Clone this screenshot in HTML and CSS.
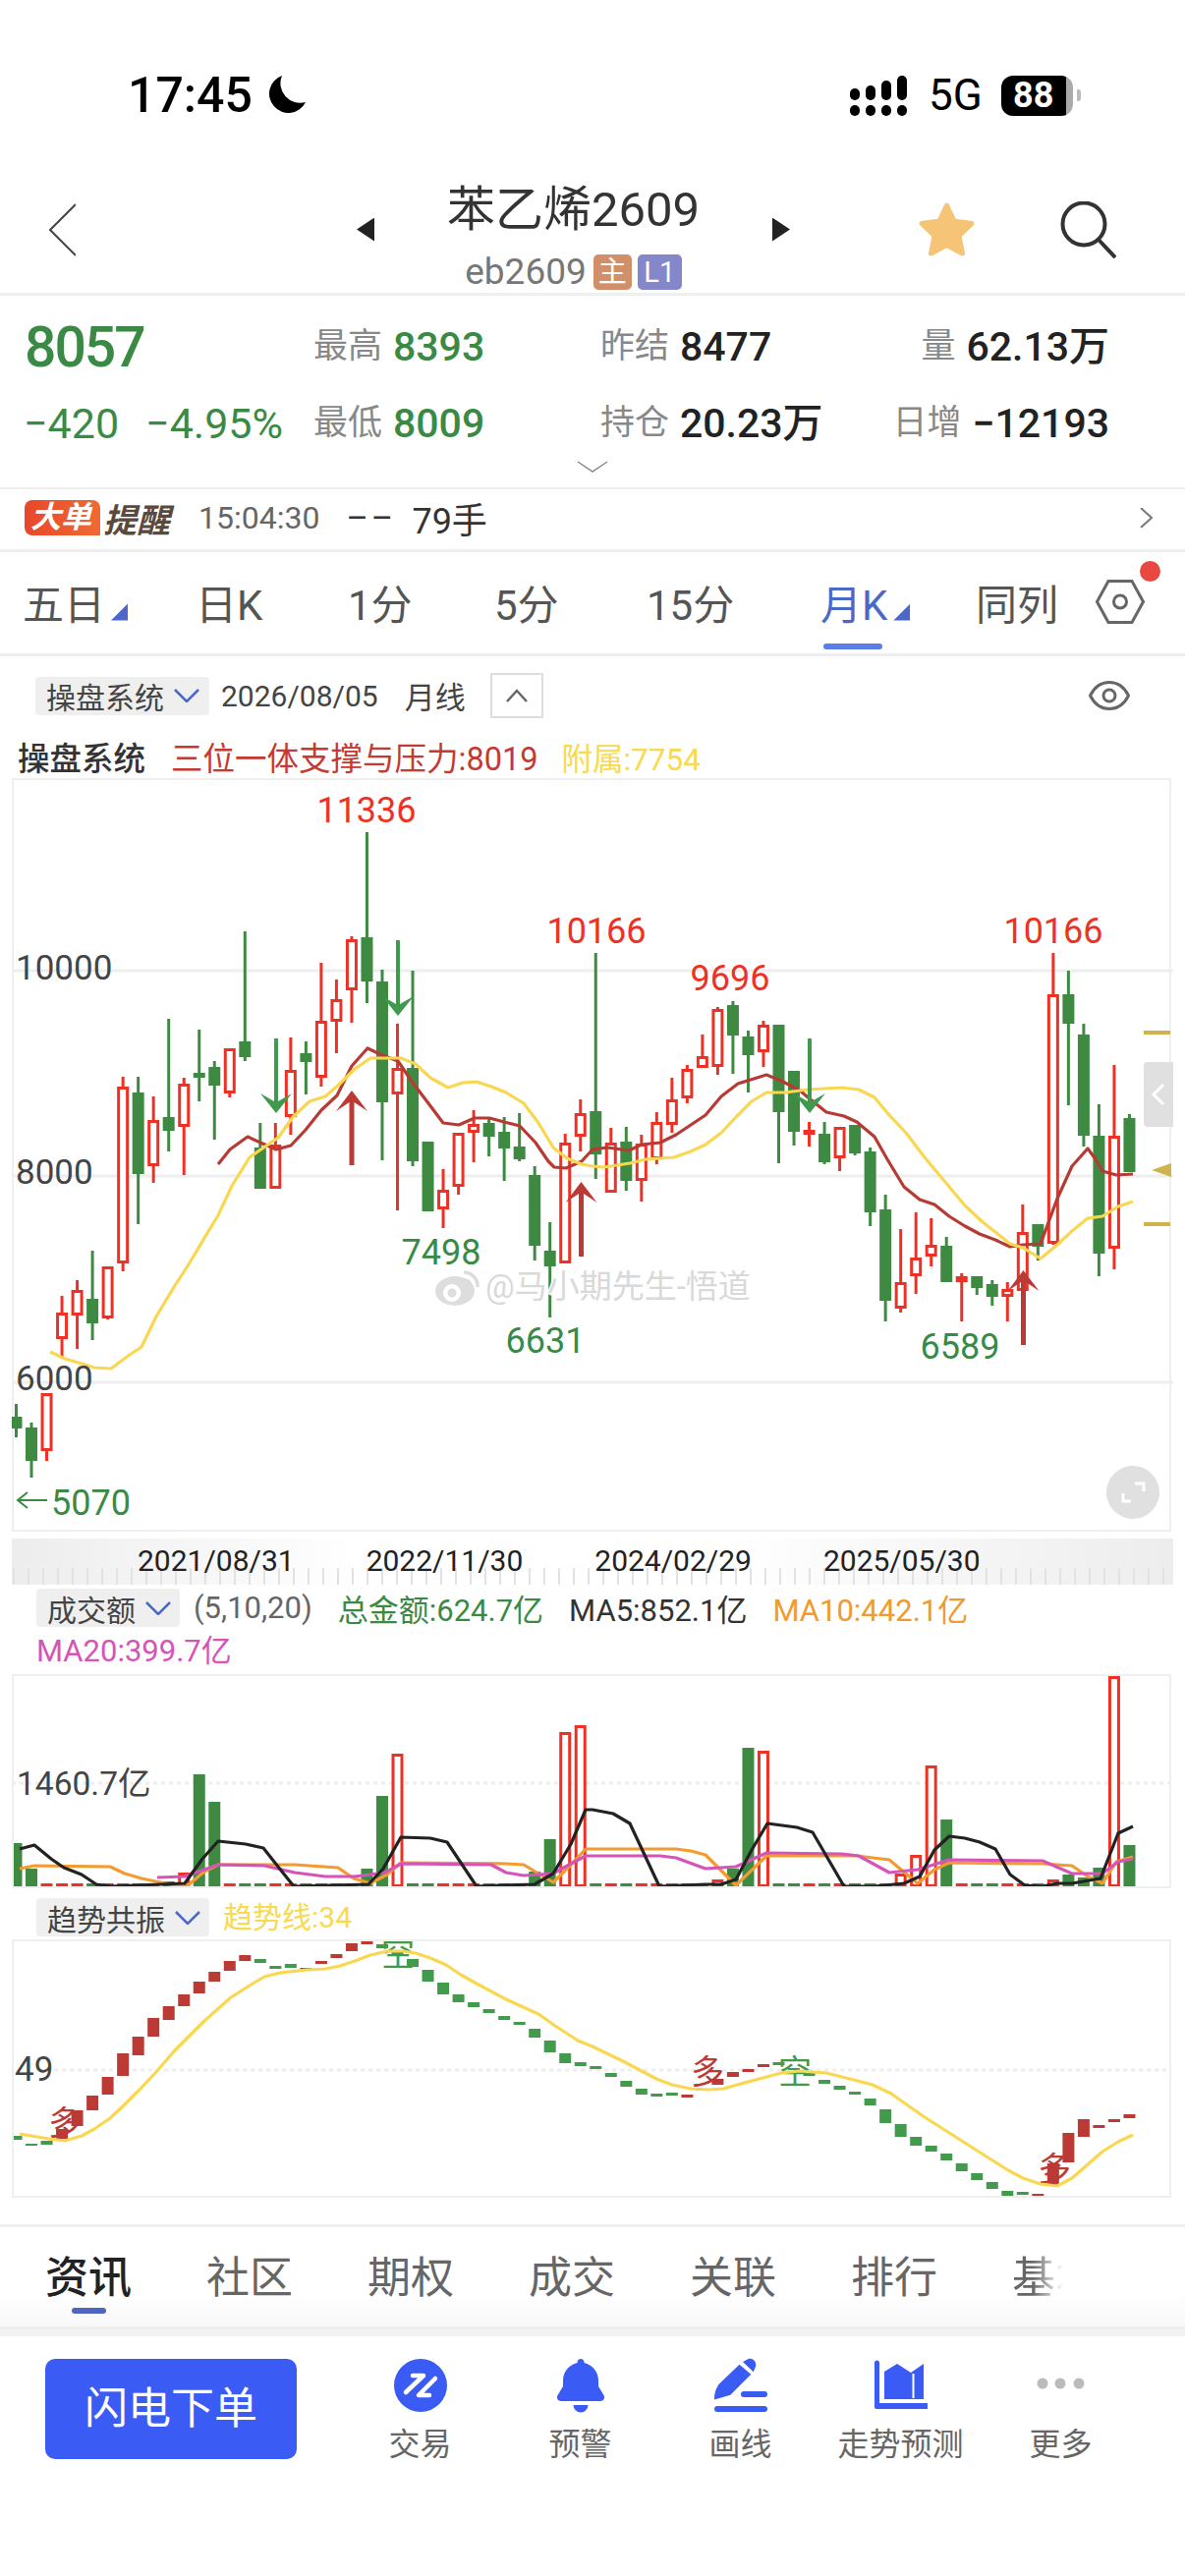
FILE: index.html
```html
<!DOCTYPE html>
<html lang="zh-CN">
<head>
    <meta charset="UTF-8">
    <meta name="viewport" content="width=device-width, initial-scale=1.0">
    <title>苯乙烯2609</title>
    <link rel="stylesheet" href="styles.css">
</head>
<body>

    <!-- Status bar -->
    <div class="status">
        <span class="clock">17:45</span>
        <svg class="moon" viewBox="0 0 39 39"><path d="M15 0A19.5 19.5 0 1 0 39 27A20 20 0 0 1 15 0Z"/></svg>
        <svg class="signal" viewBox="0 0 58 41">
            <rect x="0" y="13" width="10" height="12" rx="5"/><rect x="16" y="10" width="10" height="15" rx="5"/>
            <rect x="32" y="5" width="10" height="20" rx="5"/><rect x="48" y="0" width="10" height="25" rx="5"/>
            <rect x="0" y="30" width="10" height="11" rx="5"/><rect x="16" y="30" width="10" height="11" rx="5"/>
            <rect x="32" y="30" width="10" height="11" rx="5"/><rect x="48" y="30" width="10" height="11" rx="5"/>
        </svg>
        <span class="net">5G</span>
        <span class="battery">88</span>
    </div>

    <!-- Title bar -->
    <div class="nav">
        <svg class="back" viewBox="0 0 27 54"><path d="M27 1L1 27L27 53"/></svg>
        <span class="tri tri-left"></span>
        <div class="title-box">
            <div class="title">苯乙烯2609</div>
            <div class="subtitle">eb2609<span class="tag tag-main">主</span><span class="tag tag-level">L1</span></div>
        </div>
        <span class="tri tri-right"></span>
        <svg class="star" viewBox="0 0 61 60"><path d="M30.5 5L38 21L56 23.5L43 36L46.5 54L30.5 45.5L14.5 54L18 36L5 23.5L23 21Z"/></svg>
        <svg class="search" viewBox="0 0 58 58"><circle cx="24" cy="23" r="21.5"/><path d="M39 39L56 57"/></svg>
    </div>

    <!-- Quote -->
    <div class="quote">
        <div class="quote-grid">
            <div class="price green">8057</div>
            <div class="cell"><span class="lab">最高</span><span class="val green">8393</span></div>
            <div class="cell"><span class="lab">昨结</span><span class="val">8477</span></div>
            <div class="cell cell-end"><span class="lab">量</span><span class="val">62.13万</span></div>
            <div class="change green"><span>−420</span><span>−4.95%</span></div>
            <div class="cell"><span class="lab">最低</span><span class="val green">8009</span></div>
            <div class="cell"><span class="lab">持仓</span><span class="val">20.23万</span></div>
            <div class="cell cell-end"><span class="lab">日增</span><span class="val">−12193</span></div>
        </div>
        <svg class="more-down" viewBox="0 0 32 12"><path d="M1 1L16 11L31 1"/></svg>
    </div>

    <!-- Big order alert -->
    <div class="alert">
        <span class="alert-tag">大单</span>
        <span class="alert-word">提醒</span>
        <span class="alert-time">15:04:30</span>
        <span class="alert-dash">––</span>
        <span class="alert-qty">79手</span>
        <svg class="alert-go" viewBox="0 0 13 20"><path d="M1 0L12 10L1 20"/></svg>
    </div>

    <!-- Period tabs -->
    <div class="periods">
        <div class="period">五日<span class="corner"></span></div>
        <div class="period">日K</div>
        <div class="period">1分</div>
        <div class="period">5分</div>
        <div class="period">15分</div>
        <div class="period period-on">月K<span class="corner"></span></div>
        <div class="period">同列</div>
        <div class="gear-box">
            <svg class="gear" viewBox="0 0 50 45"><path d="M1.5 22.5L13 1.5H37L48.5 22.5L37 43.5H13Z"/><circle cx="25" cy="22.5" r="6.5"/></svg>
            <span class="red-dot"></span>
        </div>
    </div>

    <!-- Chart toolbar -->
    <div class="toolbar">
        <div class="pill pill-main">操盘系统<svg class="chev" viewBox="0 0 26 14"><path d="M1 1L13 13L25 1"/></svg></div>
        <span class="bar-date">2026/08/05</span>
        <span class="bar-kind">月线</span>
        <div class="fold"><svg viewBox="0 0 24 14"><path d="M2 13L12 2L22 13"/></svg></div>
        <svg class="eye" viewBox="0 0 42 30"><path d="M1.5 15C6 6 12 1.5 21 1.5S36 6 40.5 15C36 24 30 28.5 21 28.5S6 24 1.5 15Z"/><circle cx="21" cy="15" r="6"/></svg>
    </div>
    <div class="legend">
        <span class="legend-name">操盘系统</span>
        <span class="legend-red">三位一体支撑与压力:8019</span>
        <span class="legend-yellow">附属:7754</span>
    </div>

    <!-- Main K line chart, filled by chart.js -->
    <svg id="kline" class="canvas canvas-kline" viewBox="0 791 1206 770"></svg>

    <div class="axis">
        <span>2021/08/31</span>
        <span>2022/11/30</span>
        <span>2024/02/29</span>
        <span>2025/05/30</span>
    </div>

    <!-- Turnover -->
    <div class="ind-head">
        <div class="ind-row">
            <div class="pill">成交额<svg class="chev" viewBox="0 0 26 14"><path d="M1 1L13 13L25 1"/></svg></div>
            <span class="ind-params">(5,10,20)</span>
            <span class="green">总金额:624.7亿</span>
            <span class="ink">MA5:852.1亿</span>
            <span class="orange">MA10:442.1亿</span>
        </div>
        <div class="ind-row2 magenta">MA20:399.7亿</div>
    </div>
    <svg id="volume" class="canvas canvas-volume" viewBox="0 1703 1206 220"></svg>

    <!-- Trend -->
    <div class="trend-head">
        <div class="pill">趋势共振<svg class="chev" viewBox="0 0 26 14"><path d="M1 1L13 13L25 1"/></svg></div>
        <span class="trend-value">趋势线:34</span>
    </div>
    <svg id="trend" class="canvas canvas-trend" viewBox="0 1974 1206 264"></svg>

    <!-- News tabs -->
    <div class="news">
        <span class="news-tab news-on">资讯</span>
        <span class="news-tab">社区</span>
        <span class="news-tab">期权</span>
        <span class="news-tab">成交</span>
        <span class="news-tab">关联</span>
        <span class="news-tab">排行</span>
        <span class="news-tab news-fade">基本</span>
        <div class="menu"><i></i><i></i><i></i></div>
    </div>

    <!-- Bottom actions -->
    <div class="actions">
        <div class="flash">闪电下单</div>
        <div class="action">
            <svg viewBox="0 0 54 54"><circle class="blue-fill" cx="27" cy="27" r="27"/><path class="white-line" d="M19 17H30L12 34M42 20L25 37H36"/></svg>
            <span>交易</span>
        </div>
        <div class="action">
            <svg viewBox="0 0 54 54"><path class="blue-fill" d="M27 0A3.5 3.5 0 0 1 30.5 4C39 6 45 13 45 22V28L50.5 37C52 40 50 43 47 43H7C4 43 2 40 3.5 37L9 28V22C9 13 15 6 23.5 4A3.5 3.5 0 0 1 27 0ZM19.5 47H34.5A7.5 7.5 0 0 1 19.5 47Z"/></svg>
            <span>预警</span>
        </div>
        <div class="action">
            <svg viewBox="0 0 54 54"><path class="blue-fill" d="M25.5 5.7L37.3 15.7L16.3 36.7L0 41.5C-.3 36 1.5 30 4.7 25.7ZM29 3L34.7 0C39 -1 43.5 3 42 8L39.7 13.3Z"/><rect class="blue-fill" x="27" y="33" width="27" height="6" rx="3"/><rect class="blue-fill" x="0" y="48" width="54" height="6" rx="3"/></svg>
            <span>画线</span>
        </div>
        <div class="action">
            <svg viewBox="0 0 54 54"><path class="blue-fill" d="M0 4A2.5 2.5 0 0 1 5 4V45H54V51H2A2 2 0 0 1 0 49Z"/><path class="blue-fill" d="M10 13L23 5L37 14L50 5V41H10Z"/><path class="white-thin" d="M39.5 15V40"/></svg>
            <span>走势预测</span>
        </div>
        <div class="action">
            <svg viewBox="0 0 54 54"><circle class="grey-fill" cx="8" cy="25" r="5.5"/><circle class="grey-fill" cx="26" cy="25" r="5.5"/><circle class="grey-fill" cx="45" cy="25" r="5.5"/></svg>
            <span>更多</span>
        </div>
    </div>

    <script src="chart.js"></script>
</body>
</html>
```

FILE: styles.css
```css
* {
    margin: 0;
    padding: 0;
    box-sizing: border-box;
}

body {
    width: 1206px;
    height: 2622px;
    overflow: hidden;
    background-color: #fff;
    color: #333;
    font-family: Roboto, "Noto Sans CJK SC", sans-serif;
}

.green { color: #3a8a45; }
.ink { color: #333; }
.orange { color: #f19a2e; }
.magenta { color: #d654b8; }

/* Status bar */
.status {
    height: 160px;
    padding: 77px 114px 0 130px;
    display: flex;
    align-items: flex-start;
    color: #000;
}

.clock {
    font-size: 50px;
    font-weight: 500;
    line-height: 41px;
}

.moon {
    width: 39px;
    height: 39px;
    margin-left: 15px;
    fill: #000;
}

.signal {
    width: 58px;
    height: 41px;
    margin-left: auto;
    fill: #000;
}

.net {
    width: 51px;
    margin-left: 22px;
    font-size: 44px;
    line-height: 41px;
    white-space: nowrap;
}

.battery {
    position: relative;
    width: 73px;
    height: 41px;
    margin-left: 23px;
    padding-left: 12px;
    border-radius: 12px;
    background: linear-gradient(90deg, #000 66px, #aaa 66px);
    color: #fff;
    font-size: 36px;
    font-weight: 700;
    line-height: 41px;
}

.battery::after {
    content: "";
    position: absolute;
    top: 14px;
    right: -8px;
    width: 4px;
    height: 12px;
    border-radius: 0 3px 3px 0;
    background-color: #bbb;
}

/* Title bar */
.nav {
    height: 141px;
    padding: 12px 0 3px 50px;
    display: flex;
    align-items: center;
    border-bottom: 3px solid #efefef;
}

.back {
    width: 27px;
    height: 54px;
    fill: none;
    stroke: #444;
    stroke-width: 2;
}

.tri {
    width: 18px;
    height: 24px;
    background-color: #222;
}

.tri-left {
    margin-left: 286px;
    clip-path: polygon(100% 0, 100% 100%, 0 50%);
}

.tri-right {
    clip-path: polygon(0 0, 100% 50%, 0 100%);
}

.title-box {
    width: 405px;
    height: 123px;
    padding-top: 18px;
    align-self: flex-start;
    text-align: center;
}

.title {
    font-size: 49px;
    line-height: 48px;
    color: #333;
}

.subtitle {
    margin-top: 21px;
    display: flex;
    justify-content: center;
    align-items: center;
    font-size: 37px;
    line-height: 36px;
    color: #777;
}

.tag {
    height: 36px;
    margin-left: 6px;
    border-radius: 5px;
    color: #fff;
    font-size: 29px;
    line-height: 36px;
    text-align: center;
}

.tag-main {
    width: 39px;
    margin-left: 7px;
    background-color: #d2906a;
}

.tag-level {
    width: 45px;
    background-color: #8487c9;
}

.star {
    width: 61px;
    height: 60px;
    margin-left: 129px;
    fill: #f5c477;
    stroke: #f5c477;
    stroke-width: 5;
    stroke-linejoin: round;
}

.search {
    width: 58px;
    height: 58px;
    margin-left: 85px;
    fill: none;
    stroke: #333;
    stroke-width: 4;
}

/* Quote */
.quote {
    height: 197px;
    padding-top: 13px;
    border-bottom: 2px solid #eee;
}

.quote-grid {
    display: grid;
    grid-template-columns: 294px 292px 292px 226px;
    grid-auto-rows: 78px;
    padding-left: 25px;
    align-items: center;
}

.price {
    font-size: 57px;
    font-weight: 500;
    letter-spacing: -2px;
}

.change {
    display: flex;
    gap: 27px;
    font-size: 43px;
    margin-left: -1px;
    white-space: nowrap;
}

.cell {
    display: flex;
    align-items: center;
    font-size: 41px;
    font-weight: 500;
    line-height: 50px;
}

.cell-end {
    justify-content: flex-end;
}

.lab {
    margin-right: 11px;
    color: #888;
    font-size: 35px;
    font-weight: 400;
}

.val {
    color: #222;
}

.val.green {
    color: #3a8a45;
}

.more-down {
    display: block;
    width: 32px;
    height: 12px;
    margin: -1px auto 0;
    fill: none;
    stroke: #888;
    stroke-width: 1.5;
}

/* Alert row */
.alert {
    height: 64px;
    padding: 0 33px 3px 25px;
    display: flex;
    align-items: center;
    border-bottom: 3px solid #eee;
}

.alert-tag {
    width: 77px;
    height: 36px;
    padding-left: 6px;
    border-radius: 8px 8px 0 8px;
    background: linear-gradient(90deg, #e8472a, #f06a33);
    color: #fff;
    font-size: 31px;
    font-style: italic;
    font-weight: 700;
    line-height: 36px;
}

.alert-word {
    margin-left: 3px;
    color: #5a4a3e;
    font-size: 34px;
    font-style: italic;
    font-weight: 700;
}

.alert-time {
    margin-left: 29px;
    color: #666;
    font-size: 32px;
}

.alert-dash {
    width: 40px;
    margin-left: 27px;
    color: #333;
    font-size: 34px;
    letter-spacing: 3px;
}

.alert-qty {
    margin-left: 27px;
    color: #333;
    font-size: 36px;
}

.alert-go {
    width: 13px;
    height: 20px;
    margin-left: auto;
    fill: none;
    stroke: #777;
    stroke-width: 2;
}

/* Period tabs */
.periods {
    height: 106px;
    padding: 0 0 3px 23px;
    display: grid;
    grid-template-columns: 176px 155px 149px 155px 177px 158px 122px 70px;
    align-items: center;
    border-bottom: 3px solid #eee;
}

.period {
    position: relative;
    display: flex;
    font-size: 42px;
    color: #555;
}

.period-on {
    color: #4a68c8;
}

.period-on::after {
    content: "";
    position: absolute;
    left: 3px;
    bottom: -18px;
    width: 60px;
    height: 6px;
    border-radius: 3px;
    background-color: #5b7de8;
}

.corner {
    width: 17px;
    height: 17px;
    margin: 33px 0 0 6px;
    background-color: #4a68c8;
    clip-path: polygon(100% 0, 100% 100%, 0 100%);
}

.gear-box {
    position: relative;
    width: 50px;
    height: 45px;
}

.gear {
    display: block;
    width: 50px;
    height: 45px;
    fill: none;
    stroke: #666;
    stroke-width: 3;
}

.red-dot {
    position: absolute;
    top: -19px;
    right: -16px;
    width: 21px;
    height: 21px;
    border-radius: 50%;
    background-color: #e8483f;
}

/* Chart toolbar */
.toolbar {
    height: 80px;
    padding: 0 56px 0 36px;
    display: flex;
    align-items: center;
    color: #444;
}

.pill {
    height: 39px;
    padding: 0 9px 0 11px;
    display: flex;
    align-items: center;
    border-radius: 4px;
    background-color: #efefef;
    color: #444;
    font-size: 30px;
}

.pill-main {
    width: 177px;
}

.chev {
    width: 26px;
    height: 14px;
    margin-left: 10px;
    fill: none;
    stroke: #4a68c8;
    stroke-width: 2.5;
}

.bar-date {
    margin-left: 12px;
    font-size: 30px;
}

.bar-kind {
    margin-left: 27px;
    margin-top: -2px;
    font-size: 31px;
}

.fold {
    width: 54px;
    height: 46px;
    margin-left: 25px;
    display: flex;
    align-items: center;
    justify-content: center;
    border: 2px solid #ddd;
}

.fold svg {
    width: 24px;
    height: 14px;
    fill: none;
    stroke: #666;
    stroke-width: 2.5;
}

.eye {
    width: 42px;
    height: 30px;
    margin-left: auto;
    fill: none;
    stroke: #666;
    stroke-width: 3;
}

.legend {
    height: 43px;
    padding-left: 18px;
    display: flex;
    align-items: center;
    font-size: 32.5px;
}

.legend-name {
    color: #333;
    font-weight: 500;
}

.legend-red {
    margin-left: 26px;
    color: #c43a33;
}

.legend-yellow {
    margin-left: 24px;
    color: #f9d94e;
    font-size: 31.5px;
}

/* Chart canvases */
.canvas {
    display: block;
    width: 1206px;
}

.canvas-kline { height: 770px; }
.canvas-volume { height: 220px; }
.canvas-trend { height: 264px; }

.box { fill: none; stroke: #efefef; stroke-width: 2; }
.grid { stroke: #eee; stroke-width: 3; }
.dots { stroke: #eee; stroke-width: 3; stroke-dasharray: 4 4; }
.up-wick { stroke: #ee3124; stroke-width: 3; }
.down-wick { stroke: #3e8a42; stroke-width: 3; }
.up-body { fill: #fff; stroke: #ee3124; stroke-width: 3; }
.up-dash { fill: #ee3124; }
.down-body { fill: #3e8a42; }
.line { fill: none; stroke-width: 3.2; stroke-linejoin: round; }
.line-red { stroke: #b83a35; }
.line-yellow { stroke: #fad750; }
.line-black { stroke: #222; }
.line-orange { stroke: #f39b30; }
.line-magenta { stroke: #d654b8; }
.arrow-up { fill: #bb3a36; }
.arrow-down { fill: #3f9a4e; }
.low-arrow { fill: none; stroke: #3a8a45; stroke-width: 2; }
.gold { fill: #cfb44c; }
.tab-bg { fill: #e0e0e0; }
.tab-mark { fill: none; stroke: #fff; stroke-width: 3; }
.wb-mark { fill: #ddd; }
.wb-ring { fill: none; stroke: #ddd; stroke-width: 3.5; }
.wb-eye { fill: #fff; }
.watermark { fill: #d9d9d9; font-size: 33px; paint-order: stroke; stroke: #fff; stroke-width: 3px; }

.note { font-size: 36px; }
.note-red { fill: #ee3124; }
.note-green { fill: #3a8a45; }
.scale { fill: #444; font-size: 35px; }
.scale-small { font-size: 33.5px; }
.trend-up { fill: #bb3a36; }
.trend-down { fill: #429a4d; }
.flag { font-size: 34px; }

/* Date axis */
.axis {
    height: 47px;
    margin: 5px 12px 0;
    padding: 6px 0 0 128px;
    display: flex;
    gap: 73px;
    background:
        repeating-linear-gradient(90deg, #e2e2e2 0 2px, transparent 2px 15px) 1px 100% / 100% 17px no-repeat,
        linear-gradient(90deg, #ededed, #fff 30%, #fff 62%, #ededed);
    color: #222;
    font-size: 30px;
    line-height: 34px;
}

/* Indicator headers */
.ind-head {
    height: 90px;
    padding: 4px 0 0 37px;
    font-size: 31px;
}

.ind-row {
    height: 39px;
    display: flex;
    align-items: center;
    gap: 26px;
    white-space: nowrap;
}

.ind-params {
    margin-left: -12px;
    color: #666;
}

.ind-row2 {
    margin-top: 5px;
    line-height: 40px;
}

.trend-head {
    height: 51px;
    padding: 9px 0 0 37px;
    display: flex;
    align-items: flex-start;
    font-size: 30px;
}

.trend-value {
    margin-left: 14px;
    color: #f9d94e;
    line-height: 39px;
}

/* News tabs */
.news {
    height: 107px;
    margin-top: 26px;
    padding: 0 54px 6px 46px;
    display: flex;
    align-items: center;
    gap: 76px;
    border-top: 3px solid #eee;
    border-bottom: 3px solid #eee;
    background: linear-gradient(#fff 65%, #f8f8f8);
}

.news-tab {
    position: relative;
    flex: none;
    color: #666;
    font-size: 44px;
    white-space: nowrap;
}

.news-on {
    color: #222;
    font-weight: 500;
}

.news-on::after {
    content: "";
    position: absolute;
    left: 27px;
    bottom: -8px;
    width: 35px;
    height: 6px;
    border-radius: 3px;
    background-color: #4f66c0;
}

.news-fade {
    width: 52px;
    overflow: hidden;
    -webkit-mask-image: linear-gradient(90deg, #000 40%, transparent);
    mask-image: linear-gradient(90deg, #000 40%, transparent);
}

.menu {
    margin-left: auto;
    width: 37px;
    display: flex;
    flex-direction: column;
    gap: 12px;
}

.menu i {
    display: block;
    height: 3px;
    background-color: #555;
}

/* Bottom actions */
.actions {
    padding: 23px 0 0 46px;
    display: flex;
    align-items: flex-start;
    border-top: 7px solid #f2f2f2;
}

.flash {
    width: 256px;
    height: 102px;
    margin-right: 44px;
    border-radius: 10px;
    background-color: #3a5cf5;
    color: #fff;
    font-size: 44px;
    line-height: 102px;
    text-align: center;
}

.action {
    width: 163px;
    display: flex;
    flex-direction: column;
    align-items: center;
    color: #666;
    font-size: 32px;
}

.action svg {
    width: 54px;
    height: 54px;
    overflow: visible;
    margin-bottom: 7px;
}

.blue-fill { fill: #3a5cf5; }
.grey-fill { fill: #bbb; }
.white-line { fill: none; stroke: #fff; stroke-width: 4.5; stroke-linecap: round; stroke-linejoin: round; }
.white-thin { fill: none; stroke: #fff; stroke-width: 2; }
```

FILE: chart.js
```js
// Draws the three chart panels. All coordinates are page pixels, the
// viewBox of each svg maps them to the panel.
const SVG_NS = "http://www.w3.org/2000/svg";

function add(parent, tag, cls, attrs, text) {
    const node = document.createElementNS(SVG_NS, tag);
    if (cls) node.setAttribute("class", cls);
    for (const key in attrs) node.setAttribute(key, attrs[key]);
    if (text) node.textContent = text;
    parent.appendChild(node);
    return node;
}

function slotX(i) {
    return 16.5 + 15.52 * i;
}

// solid bar, cut at the left edge of the panel
function solidBar(svg, cls, i, top, bottom) {
    const x = Math.max(slotX(i) - 6, 12);
    add(svg, "rect", cls, { x: x, y: top, width: slotX(i) + 6 - x, height: bottom - top });
}

// [up, high, bodyTop, bodyBottom, low]
const candles = [
    [0,1429,1442,1454,1463],[0,1448,1453,1487,1504],[1,1418,1418,1477,1487],[1,1319,1336,1363,1382],
    [1,1303,1313,1339,1373],[0,1273,1322,1347,1364],[1,1289,1289,1342,1343],[1,1096,1106,1286,1294],
    [0,1096,1112,1195,1246],[1,1116,1140,1187,1204],[0,1037,1137,1151,1172],[1,1097,1103,1147,1196],
    [0,1048,1092,1097,1121],[0,1080,1086,1105,1160],[1,1067,1067,1113,1117],[0,948,1060,1076,1080],
    [0,1143,1168,1210,1210],[1,1143,1165,1210,1210],[1,1056,1089,1137,1155],[0,1060,1072,1081,1114],
    [1,980,1039,1097,1106],[1,997,1017,1040,1072],[1,953,956,1008,1041],[0,847,954,999,1021],
    [0,987,999,1122,1181],[1,1042,1087,1114,1232],[0,988,1087,1182,1187],[0,1162,1162,1233,1233],
    [1,1190,1211,1231,1250],[1,1153,1153,1208,1216],[1,1130,1144,1153,1183],[0,1137,1143,1157,1177],
    [0,1137,1152,1169,1202],[0,1133,1167,1180,1182],[0,1187,1196,1268,1283],[0,1244,1273,1289,1341],
    [1,1154,1163,1286,1286],[1,1119,1133,1157,1172],[0,970,1131,1175,1200],[1,1148,1163,1214,1214],
    [0,1147,1162,1202,1212],[1,1155,1164,1202,1223],[1,1132,1142,1180,1185],[1,1097,1119,1145,1153],
    [1,1084,1088,1118,1123],[1,1053,1075,1087,1087],[1,1025,1027,1086,1094],[0,1019,1023,1054,1093],
    [0,1049,1055,1074,1112],[1,1039,1043,1071,1086],[0,1043,1043,1132,1184],[0,1090,1090,1152,1166],
    [1,1142,1150,1155,1167],[0,1142,1154,1183,1185],[1,1147,1147,1179,1192],[0,1145,1145,1174,1176],
    [0,1168,1172,1234,1248],[0,1216,1231,1324,1345],[1,1251,1305,1332,1336],[1,1234,1280,1299,1317],
    [1,1240,1267,1279,1289],[0,1259,1268,1305,1305],[1,1296,1299,1305,1345],[0,1299,1299,1311,1318],
    [0,1303,1307,1320,1329],[1,1305,1312,1320,1345],[1,1226,1254,1314,1345],[0,1246,1246,1269,1283],
    [1,970,1012,1266,1267],[0,988,1012,1042,1125],[0,1042,1053,1156,1167],[0,1124,1156,1276,1299],
    [1,1084,1156,1271,1292],[0,1134,1138,1193,1193]
];

const redLine = "222,1185 234,1170 252,1157 265,1163 281,1170 296,1166 311,1150 327,1130 343,1115 358,1085 374,1067 389,1074 405,1080 420,1102 436,1123 451,1143 467,1145 483,1138 498,1138 513,1142 529,1146 545,1163 558,1182 564,1188 576,1189 592,1182 603,1170 618,1168 640,1171 653,1165 672,1163 688,1155 718,1135 734,1116 751,1103 780,1094 795,1100 814,1110 826,1120 841,1132 859,1136 872,1142 890,1157 903,1180 920,1208 936,1221 951,1226 966,1238 982,1248 997,1256 1013,1262 1028,1269 1041,1267 1059,1266 1076,1220 1091,1187 1099,1178 1107,1169 1115,1180 1122,1192 1136,1196 1153,1195";

const yellowLine = "51,1376 66,1383 83,1388 96,1392 113,1393 129,1381 144,1371 159,1340 177,1310 192,1287 208,1260 222,1237 236,1207 254,1178 283,1158 298,1137 315,1121 331,1116 346,1103 361,1088 377,1077 408,1077 423,1083 438,1097 456,1107 471,1102 485,1101 500,1106 515,1112 533,1123 548,1143 563,1168 577,1179 592,1185 603,1187 615,1188 641,1184 657,1180 686,1178 703,1172 718,1165 734,1153 749,1137 765,1121 780,1112 799,1112 822,1109 857,1107 874,1109 890,1117 905,1135 922,1153 941,1178 982,1227 999,1243 1028,1266 1041,1270 1059,1281 1076,1267 1091,1253 1107,1240 1122,1238 1138,1228 1153,1223";

const notes = [
    ["11336", 373, 837, "note-red"], ["10166", 607, 960, "note-red"], ["9696", 743, 1008, "note-red"],
    ["10166", 1072, 960, "note-red"], ["7498", 449, 1287, "note-green"], ["6631", 555, 1377, "note-green"],
    ["6589", 977, 1383, "note-green"]
];

function drawKline() {
    const svg = document.getElementById("kline");
    add(svg, "rect", "box", { x: 13, y: 793, width: 1178, height: 765 });
    [988, 1197, 1407].forEach(y => add(svg, "line", "grid", { x1: 12, x2: 1194, y1: y, y2: y }));

    candles.forEach((c, i) => {
        const x = slotX(i);
        const wick = c[0] ? "up-wick" : "down-wick";
        add(svg, "line", wick, { x1: x, x2: x, y1: c[1], y2: c[2] });
        add(svg, "line", wick, { x1: x, x2: x, y1: c[3], y2: c[4] });
        if (c[0]) {
            add(svg, "rect", "up-body", { x: x - 4.5, y: c[2] + 1.5, width: 9, height: c[3] - c[2] - 3 });
        } else {
            solidBar(svg, "down-body", i, c[2], c[3]);
        }
    });

    add(svg, "polyline", "line line-red", { points: redLine });
    add(svg, "polyline", "line line-yellow", { points: yellowLine });

    // buy and sell arrows: [x, tip, tail]
    [[358, 1110, 1186], [591.5, 1203, 1279], [1041.5, 1293, 1369]].forEach(a => {
        const [x, tip, tail] = a;
        add(svg, "path", "arrow-up", {
            d: `M${x} ${tip}L${x + 16} ${tip + 21}L${x + 2.5} ${tip + 12}V${tail}H${x - 2.5}V${tip + 12}L${x - 16} ${tip + 21}Z`
        });
    });
    [[281, 1133, 1057], [405, 1034, 957], [824, 1133, 1057]].forEach(a => {
        const [x, tip, tail] = a;
        add(svg, "path", "arrow-down", {
            d: `M${x} ${tip}L${x + 16} ${tip - 20}L${x + 2} ${tip - 12}V${tail}H${x - 2}V${tip - 12}L${x - 16} ${tip - 20}Z`
        });
    });

    notes.forEach(n => add(svg, "text", "note " + n[3], { x: n[1], y: n[2], "text-anchor": "middle" }, n[0]));
    [["10000", 997], ["8000", 1205], ["6000", 1415]].forEach(s => add(svg, "text", "scale", { x: 16, y: s[1] }, s[0]));
    add(svg, "text", "note note-green", { x: 52, y: 1542 }, "5070");
    add(svg, "path", "low-arrow", { d: "M48 1527H19M28 1519L18 1527L28 1535" });

    // side marks and handles
    add(svg, "rect", "gold", { x: 1164, y: 1049, width: 27, height: 4 });
    add(svg, "rect", "gold", { x: 1164, y: 1244, width: 27, height: 4 });
    add(svg, "path", "gold", { d: "M1172 1191L1192 1184V1198Z" });
    add(svg, "path", "tab-bg", { d: "M1194 1081V1147H1168A4 4 0 0 1 1164 1143V1085A4 4 0 0 1 1168 1081Z" });
    add(svg, "path", "tab-mark", { d: "M1184 1104L1174 1114L1184 1124" });
    add(svg, "circle", "tab-bg", { cx: 1153, cy: 1519, r: 27 });
    add(svg, "path", "tab-mark", { d: "M1155 1510H1164V1518M1143 1520V1528H1151" });

    // weibo watermark
    add(svg, "ellipse", "wb-mark", { cx: 463, cy: 1314, rx: 20, ry: 15 });
    add(svg, "circle", "wb-eye", { cx: 460, cy: 1316, r: 9 });
    add(svg, "circle", "wb-mark", { cx: 460, cy: 1316, r: 4.5 });
    add(svg, "path", "wb-ring", { d: "M472 1295A14 14 0 0 1 486 1310M473 1303A6 6 0 0 1 479 1309" });
    add(svg, "text", "watermark", { x: 494, y: 1321 }, "@马小期先生-悟道");
}

// tops of the bars that stand above the base line
const volumeTops = {
    0: 1876, 1: 1902, 10: 1915, 11: 1906, 12: 1806, 13: 1834, 23: 1902, 24: 1828, 25: 1785,
    34: 1905, 35: 1872, 36: 1763, 37: 1756, 46: 1913, 47: 1902, 48: 1779, 49: 1782,
    57: 1917, 58: 1907, 59: 1888, 60: 1797, 61: 1852, 68: 1913, 69: 1908, 70: 1911, 71: 1901, 72: 1706, 73: 1878
};

const volBlack = "20,1882 35,1878 52,1892 65,1901 83,1908 98,1918 113,1920 188,1917 206,1892 222,1874 250,1877 268,1881 283,1900 299,1920 375,1918 390,1902 408,1870 438,1871 455,1875 485,1920 544,1918 563,1907 581,1877 596,1842 603,1842 624,1846 641,1856 671,1920 718,1918 734,1918 749,1913 765,1883 781,1856 811,1860 827,1865 859,1920 890,1920 920,1917 936,1910 951,1883 966,1869 982,1871 997,1875 1013,1882 1028,1908 1043,1919 1061,1920 1076,1917 1091,1917 1120,1912 1138,1866 1153,1859";
const volOrange = "20,1902 35,1899 112,1900 127,1907 144,1912 173,1918 190,1920 208,1905 222,1898 300,1898 344,1901 360,1912 377,1917 394,1908 408,1896 515,1897 533,1898 548,1907 563,1916 581,1898 596,1882 688,1882 703,1884 718,1888 749,1919 780,1889 872,1889 905,1893 934,1917 951,1903 966,1896 1061,1897 1091,1899 1107,1910 1122,1917 1136,1895 1153,1890";
const volMagenta = "160,1911 188,1910 208,1903 222,1898 269,1899 300,1906 331,1910 361,1910 392,1906 408,1897 500,1898 515,1906 533,1909 563,1907 581,1897 596,1889 672,1889 688,1891 718,1902 749,1900 780,1886 857,1887 874,1889 905,1906 934,1903 966,1893 1061,1894 1091,1907 1122,1907 1138,1895 1153,1892";

function drawVolume() {
    const svg = document.getElementById("volume");
    add(svg, "line", "dots", { x1: 12, x2: 1191, y1: 1815, y2: 1815 });
    candles.forEach((c, i) => {
        const top = volumeTops[i] || 1917;
        if (!c[0]) {
            solidBar(svg, "down-body", i, top, 1921);
        } else if (volumeTops[i]) {
            add(svg, "rect", "up-body", { x: slotX(i) - 4.5, y: top + 1.5, width: 9, height: 1921 - top - 3 });
        } else {
            solidBar(svg, "up-dash", i, top, 1921);
        }
    });
    add(svg, "polyline", "line line-orange", { points: volOrange });
    add(svg, "polyline", "line line-magenta", { points: volMagenta });
    add(svg, "polyline", "line line-black", { points: volBlack });
    add(svg, "rect", "box", { x: 13, y: 1705, width: 1178, height: 216 });
    add(svg, "text", "scale scale-small", { x: 17, y: 1827 }, "1460.7亿");
}

// [up, top, bottom]
const trendBars = [
    [0,2174,2178],[0,2182,2184],[0,2179,2183],[1,2167,2177],[1,2148,2164],[1,2133,2148],[1,2114,2132],[1,2090,2113],
    [1,2073,2092],[1,2054,2073],[1,2042,2056],[1,2030,2042],[1,2017,2029],[1,2007,2017],[1,1996,2006],[1,1990,1996],
    [0,1994,1998],[0,2001,2004],[0,1999,2003],[1,2003,2005],[1,1996,1999],[1,1989,1993],[1,1978,1986],[1,1975,1979],
    [0,1979,1983],[0,1985,1990],[0,1994,2002],[0,2005,2017],[0,2018,2030],[0,2030,2038],[0,2038,2043],[0,2045,2049],
    [0,2052,2056],[0,2058,2061],[0,2065,2074],[0,2077,2089],[0,2090,2100],[0,2099,2103],[0,2103,2106],[0,2110,2114],
    [0,2118,2124],[0,2126,2132],[0,2131,2134],[0,2130,2133],[1,2132,2135],[1,2127,2128],[1,2116,2122],[1,2109,2114],
    [1,2106,2109],[1,2101,2104],[0,2099,2102],[0,2105,2107],[0,2110,2113],[0,2117,2121],[0,2123,2127],[0,2129,2132],
    [0,2136,2143],[0,2147,2161],[0,2162,2175],[0,2175,2184],[0,2184,2190],[0,2192,2199],[0,2202,2210],[0,2212,2219],
    [0,2221,2228],[0,2230,2236],[0,2231,2234],[1,2233,2237],[1,2202,2224],[1,2171,2201],[1,2157,2175],[1,2163,2166],
    [1,2157,2160],[1,2152,2156]
];

const trendLine = "20,2172 50,2177 66,2179 83,2174 96,2167 112,2156 127,2142 142,2127 158,2110 177,2088 208,2057 235,2033 254,2021 269,2012 285,2008 312,2005 331,2004 346,2001 361,1996 377,1990 394,1986 410,1986 423,1988 438,1993 454,2000 469,2010 485,2019 515,2035 548,2050 565,2062 588,2077 603,2083 634,2098 653,2108 668,2116 684,2122 703,2126 722,2127 736,2126 765,2118 795,2110 814,2108 841,2110 865,2116 888,2122 907,2131 941,2155 1007,2197 1026,2209 1041,2217 1059,2223 1076,2225 1091,2217 1122,2190 1138,2180 1153,2173";

function drawTrend() {
    const svg = document.getElementById("trend");
    add(svg, "line", "dots", { x1: 55, x2: 1191, y1: 2107, y2: 2107 });
    trendBars.forEach((b, i) => solidBar(svg, b[0] ? "trend-up" : "trend-down", i, b[1], b[2]));
    [["多", 66, 2173, "trend-up"], ["空", 405, 2001, "trend-down"], ["多", 720, 2121, "trend-up"],
     ["空", 809, 2121, "trend-down"], ["多", 1073, 2220, "trend-up"]].forEach(f => {
        add(svg, "text", "flag " + f[3], { x: f[1], y: f[2], "text-anchor": "middle" }, f[0]);
    });
    add(svg, "polyline", "line line-yellow", { points: trendLine });
    add(svg, "rect", "box", { x: 13, y: 1975, width: 1178, height: 261 });
    add(svg, "text", "scale", { x: 15, y: 2118 }, "49");
}

drawKline();
drawVolume();
drawTrend();
```
